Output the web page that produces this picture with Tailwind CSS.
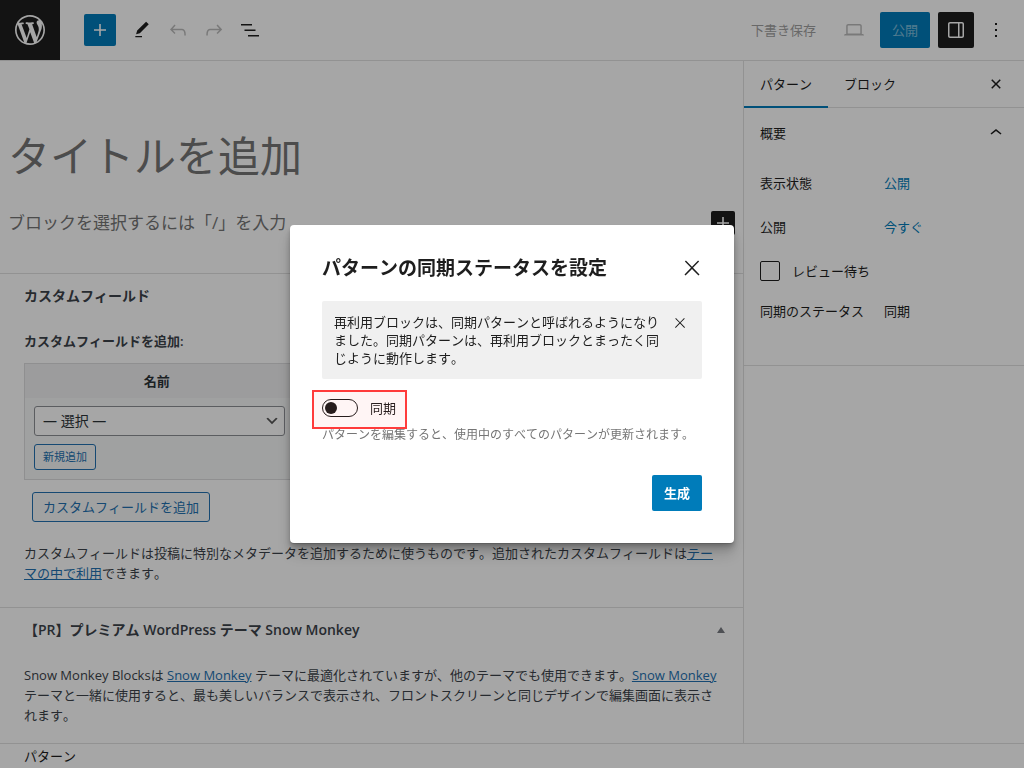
<!DOCTYPE html>
<html lang="ja">
<head>
<meta charset="utf-8">
<meta name="viewport" content="width=device-width, initial-scale=1">
<title>パターンの編集</title>
<script src="https://cdn.jsdelivr.net/npm/@tailwindcss/browser@4"></script>
</head>
<body class="bg-white text-[#1e1e1e] text-[13px] leading-5 [font-kerning:none] font-['Open_Sans','Noto_Sans_CJK_JP',sans-serif]">
<div class="flex h-screen flex-col overflow-hidden">

  <!-- Top toolbar -->
  <header class="flex shrink-0 items-center border-b border-[#e0e0e0] pr-2.5">
    <a href="#" aria-label="投稿一覧" class="flex size-15 items-center justify-center bg-[#1e1e1e] text-white">
      <svg class="size-9 fill-current" viewBox="-2 -2 24 24"><path d="M20 10c0-5.51-4.49-10-10-10C4.48 0 0 4.49 0 10c0 5.52 4.48 10 10 10 5.51 0 10-4.48 10-10zM7.78 15.37L4.37 6.22c.55-.02 1.17-.08 1.17-.08.5-.06.44-1.13-.06-1.11 0 0-1.45.11-2.37.11-.18 0-.37 0-.58-.01C4.12 2.69 6.87 1.11 10 1.11c2.33 0 4.45.87 6.05 2.34-.68-.11-1.65.39-1.65 1.58 0 .74.45 1.36.9 2.1.35.61.55 1.36.55 2.46 0 1.49-1.4 5-1.4 5l-3.03-8.37c.54-.02.82-.17.82-.17.5-.05.44-1.25-.06-1.22 0 0-1.44.12-2.38.12-.87 0-2.33-.12-2.33-.12-.5-.03-.56 1.2-.06 1.22l.92.08 1.26 3.41zM17.41 10c.24-.64.74-1.87.43-4.25.7 1.29 1.05 2.71 1.05 4.25 0 3.29-1.73 6.24-4.4 7.78.97-2.59 1.94-5.2 2.92-7.78zM6.1 18.09C3.12 16.65 1.11 13.53 1.11 10c0-1.3.23-2.48.72-3.59C3.25 10.3 4.67 14.2 6.1 18.09zm4.03-6.63l2.58 6.98c-.86.29-1.76.45-2.71.45-.79 0-1.57-.11-2.29-.33.81-2.38 1.62-4.74 2.42-7.1z"/></svg>
    </a>
    <div class="flex items-center pl-6">
      <button aria-label="ブロック挿入" class="mr-2 flex size-8 items-center justify-center rounded-xs bg-[#007cba] text-white">
        <svg class="size-6 fill-current" viewBox="0 0 24 24"><path d="M18 11.2h-5.2V6h-1.6v5.2H6v1.6h5.2V18h1.6v-5.2H18z"/></svg>
      </button>
      <button aria-label="ツール" class="flex size-9 items-center justify-center">
        <svg class="size-5 fill-current" viewBox="0 0 24 24"><path d="M20.1 5.1L16.9 2 6.2 12.7l-1.3 4.4 4.5-1.3L20.1 5.1zM4 20.8h8v-1.5H4v1.5z"/></svg>
      </button>
      <button aria-label="元に戻す" class="flex size-9 items-center justify-center text-[#bbbbbb]">
        <svg class="size-6 fill-current" viewBox="0 0 24 24"><path d="M18.3 11.7c-.6-.6-1.4-.9-2.3-.9H6.7l2.9-3.3-1.1-1-4.5 5L8.5 16l1-1-2.7-2.7H16c.5 0 .9.2 1.3.5 1 1 1 3.4 1 4.5v.3h1.5v-.2c0-1.5 0-4.3-1.5-5.7z"/></svg>
      </button>
      <button aria-label="やり直す" class="flex size-9 items-center justify-center text-[#bbbbbb]">
        <svg class="size-6 fill-current" viewBox="0 0 24 24"><path d="M15.6 6.5l-1.1 1 2.9 3.3H8c-.9 0-1.7.3-2.3.9-1.4 1.5-1.4 4.2-1.4 5.6v.2h1.5v-.3c0-1.1 0-3.5 1-4.5.3-.3.7-.5 1.3-.5h9.2L14.5 15l1.1 1.1 4.6-4.6-4.6-5z"/></svg>
      </button>
      <button aria-label="リスト表示" class="flex size-9 items-center justify-center">
        <svg class="size-6 fill-current" viewBox="0 0 24 24"><path d="M3 6h11v1.5H3V6Zm3.5 5.5h11V13h-11v-1.5ZM21 17H10v1.5h11V17Z"/></svg>
      </button>
    </div>
    <div class="ml-auto flex items-center">
      <button class="mr-5 text-[#a0a0a0]">下書き保存</button>
      <button aria-label="プレビュー" class="mr-2 flex size-9 items-center justify-center text-[#bbbbbb]">
        <svg class="size-6 fill-current" viewBox="0 0 24 24"><path d="M20.5 16h-.7V8c0-1.1-.9-2-2-2H6.2c-1.1 0-2 .9-2 2v8h-.7c-.8 0-1.5.7-1.5 1.5h20c0-.8-.7-1.5-1.5-1.5zM5.7 8c0-.3.2-.5.5-.5h11.6c.3 0 .5.2.5.5v7.6H5.7V8z"/></svg>
      </button>
      <button class="mr-2 h-9 rounded-xs bg-[#007cba] px-3 text-white/50">公開</button>
      <button aria-label="設定" class="mr-1 flex size-9 items-center justify-center rounded-xs bg-[#1e1e1e] text-white">
        <svg class="size-6 fill-current" viewBox="0 0 24 24"><path d="M18 4H6c-1.1 0-2 .9-2 2v12c0 1.1.9 2 2 2h12c1.1 0 2-.9 2-2V6c0-1.1-.9-2-2-2zm-4 14.5H6c-.3 0-.5-.2-.5-.5V6c0-.3.2-.5.5-.5h8v13zm4.5-.5c0 .3-.2.5-.5.5h-2.5v-13H18c.3 0 .5.2.5.5v12z"/></svg>
      </button>
      <button aria-label="オプション" class="flex size-9 items-center justify-center">
        <svg class="size-6 fill-current" viewBox="0 0 24 24"><path d="M13 19h-2v-2h2v2zm0-6h-2v-2h2v2zm0-6h-2V5h2v2z"/></svg>
      </button>
    </div>
  </header>

  <div class="flex min-h-0 flex-1">
    <!-- Editing canvas and meta boxes -->
    <main class="min-w-0 flex-1 overflow-hidden text-[#3c434a]">
      <section class="px-2 pt-[65px] pb-[38px]">
        <h1 class="text-[42px] leading-[60px] text-[#757575]">タイトルを追加</h1>
        <div class="mt-[25px] flex h-6 items-center justify-between">
          <p class="text-[17px] leading-6 text-[#757575]">ブロックを選択するには「/」を入力</p>
          <button aria-label="ブロックを追加" class="flex size-6 items-center justify-center rounded-xs bg-[#1e1e1e] text-white">
            <svg class="size-6 fill-current" viewBox="0 0 24 24"><path d="M18 11.2h-5.2V6h-1.6v5.2H6v1.6h5.2V18h1.6v-5.2H18z"/></svg>
          </button>
        </div>
      </section>

      <section class="border-t border-[#e0e0e0] px-6 pt-3 pb-6">
        <h2 class="text-sm leading-5 font-semibold">カスタムフィールド</h2>
        <h3 class="mt-[25px] font-semibold">カスタムフィールドを追加:</h3>
        <table class="mt-3 w-full table-fixed border-separate border-spacing-0 border border-[#dcdcde] bg-[#f6f7f7]">
          <thead>
            <tr class="h-[34px] bg-[#f0f0f1]"><th scope="col" class="w-[38%] font-semibold text-[#2c3338]">名前</th><td></td></tr>
          </thead>
          <tbody>
            <tr>
              <td class="px-[9px] pt-2 pb-[9px] pr-[3px]">
                <div class="relative">
                  <select aria-label="名前" class="block h-[30px] w-full appearance-none rounded-[3px] border border-[#8c8f94] bg-white px-2 text-sm leading-7 text-[#2c3338]"><option>— 選択 —</option></select>
                  <svg class="pointer-events-none absolute top-[7px] right-[5px] size-4" viewBox="0 0 20 20"><path d="M5 6l5 5 5-5 2 1-7 7-7-7 2-1z" fill="#555"/></svg>
                </div>
                <button class="mt-2 block h-[26px] rounded-[3px] border border-[#2271b1] bg-[#f6f7f7] px-2 text-[11px] leading-6 text-[#2271b1]">新規追加</button>
              </td>
              <td></td>
            </tr>
          </tbody>
        </table>
        <button class="mt-3 ml-2 block h-[30px] rounded-[3px] border border-[#2271b1] bg-[#f6f7f7] px-2.5 leading-7 text-[#2271b1]">カスタムフィールドを追加</button>
        <p class="mt-[21px]">カスタムフィールドは投稿に特別なメタデータを追加するために使うものです。追加されたカスタムフィールドは<a href="#" class="text-[#2271b1] underline">テーマの中で利用</a>できます。</p>
      </section>

      <section class="border-t border-[#e0e0e0] px-6 pt-3">
        <div class="flex items-center justify-between">
          <h2 class="text-sm leading-5 font-semibold">【PR】プレミアム WordPress テーマ Snow Monkey</h2>
          <button aria-label="パネルを閉じる" class="-mr-2 flex size-3 items-center justify-center">
            <svg class="h-1.5 w-2 fill-[#787c82]" viewBox="0 0 8 6"><path d="M4 0l4 6H0z"/></svg>
          </button>
        </div>
        <p class="mt-[25px]">Snow Monkey Blocksは <a href="#" class="text-[#2271b1] underline">Snow Monkey</a> テーマに最適化されていますが、他のテーマでも使用できます。<a href="#" class="text-[#2271b1] underline">Snow Monkey</a> テーマと一緒に使用すると、最も美しいバランスで表示され、フロントスクリーンと同じデザインで編集画面に表示されます。</p>
      </section>
    </main>

    <!-- Settings sidebar -->
    <aside class="w-[281px] shrink-0 border-l border-[#e0e0e0]">
      <div class="flex h-[47px] items-stretch border-b border-[#e0e0e0] pr-4">
        <button class="-mb-px border-b-2 border-[#007cba] px-4">パターン</button>
        <button class="-mb-px border-b-2 border-transparent px-4">ブロック</button>
        <button aria-label="設定を閉じる" class="ml-auto flex w-6 items-center justify-center">
          <svg class="size-6 fill-current" viewBox="0 0 24 24"><path d="M12 13.06l3.712 3.713 1.061-1.06L13.061 12l3.712-3.712-1.06-1.06L12 10.938 8.288 7.227l-1.061 1.06L10.939 12l-3.712 3.712 1.06 1.061L12 13.061z"/></svg>
        </button>
      </div>
      <div class="border-b border-[#e0e0e0] px-4 pb-10">
        <button class="flex h-[50px] w-full items-center justify-between">概要
          <svg class="size-6 fill-current" viewBox="0 0 24 24"><path d="M6.5 12.4L12 8l5.5 4.4-.9 1.2L12 10l-4.5 3.6-1-1.2z"/></svg>
        </button>
        <div class="mt-[7px] flex flex-col gap-2">
          <div class="flex h-9 items-center"><span class="w-31">表示状態</span><button class="text-[#007cba]">公開</button></div>
          <div class="flex h-9 items-center"><span class="w-31">公開</span><button class="text-[#007cba]">今すぐ</button></div>
          <label class="flex h-9 items-center gap-3"><input type="checkbox" class="size-5 appearance-none rounded-xs border border-[#1e1e1e] bg-white">レビュー待ち</label>
          <div class="flex h-7 items-center"><span class="w-31">同期のステータス</span><span>同期</span></div>
        </div>
      </div>
    </aside>
  </div>

  <footer class="h-[25px] shrink-0 border-t border-[#e0e0e0] px-6 leading-6">パターン</footer>
</div>

<!-- Modal -->
<div class="fixed inset-0 flex items-center justify-center bg-black/35">
  <div role="dialog" aria-modal="true" aria-labelledby="dialog-title" class="w-full max-w-[444px] rounded-sm bg-white px-8 pt-[25px] pb-8 shadow-[0_1px_1px_rgba(0,0,0,0.15),0_3px_4px_rgba(0,0,0,0.15),0_6px_8px_rgba(0,0,0,0.15),0_12px_16px_rgba(0,0,0,0.15)]">
    <div class="flex h-9 items-center justify-between">
      <h1 id="dialog-title" class="text-[19px] leading-7 font-semibold">パターンの同期ステータスを設定</h1>
      <button aria-label="閉じる" class="-mr-2 flex size-9 items-center justify-center">
        <svg class="size-6 fill-current" viewBox="0 0 24 24"><path d="M13 11.8l6.1-6.3-1-1-6.1 6.2-6.1-6.2-1 1 6.1 6.3-6.5 6.7 1 1 6.5-6.6 6.5 6.6 1-1z"/></svg>
      </button>
    </div>
    <div class="mt-[15px] flex items-start justify-between rounded-xs bg-[#f0f0f0] p-3">
      <p class="w-[328px] leading-[18px]">再利用ブロックは、同期パターンと呼ばれるようになりました。同期パターンは、再利用ブロックとまったく同じように動作します。</p>
      <button aria-label="通知を閉じる" class="flex h-5 w-5 items-center justify-center">
        <svg class="size-4 fill-current" viewBox="0 0 24 24"><path d="M13 11.8l6.1-6.3-1-1-6.1 6.2-6.1-6.2-1 1 6.1 6.3-6.5 6.7 1 1 6.5-6.6 6.5 6.6 1-1z"/></svg>
      </button>
    </div>
    <div class="relative mt-5 w-fit">
      <label class="flex h-[18px] items-center gap-3">
        <input type="checkbox" role="switch" class="h-[18px] w-9 appearance-none rounded-full border border-[#1e1e1e] bg-white before:mt-0.5 before:ml-0.5 before:block before:size-3 before:rounded-full before:bg-[#1e1e1e]">同期
      </label>
      <span class="pointer-events-none absolute -top-[9px] -right-[11px] -bottom-3 -left-2.5 border-2 border-[#ff3b3b] bg-[#ff0000]/4"></span>
    </div>
    <p class="mt-[9px] text-xs leading-[18px] text-[#757575]">パターンを編集すると、使用中のすべてのパターンが更新されます。</p>
    <div class="mt-[31px] flex justify-end">
      <button class="h-9 rounded-xs bg-[#007cba] px-3 font-semibold text-white">生成</button>
    </div>
  </div>
</div>
</body>
</html>
